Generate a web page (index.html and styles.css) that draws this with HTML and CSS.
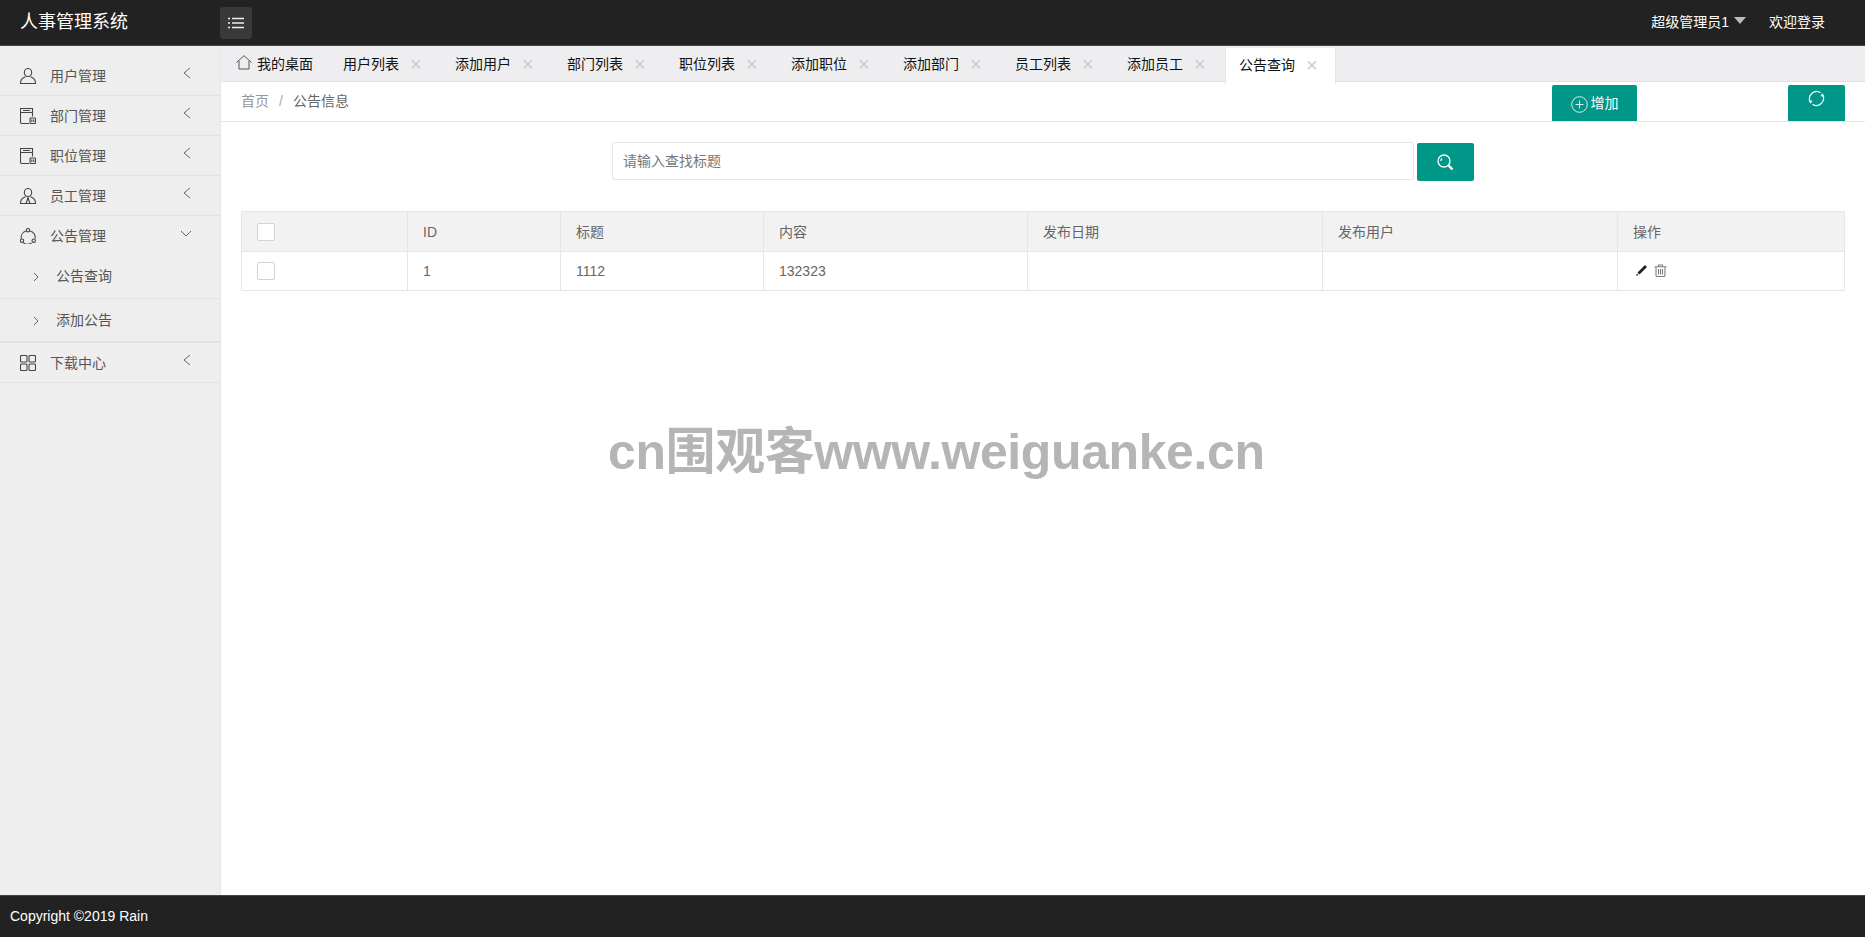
FILE: index.html
```html
<!DOCTYPE html>
<html lang="zh">
<head>
<meta charset="utf-8">
<title>人事管理系统</title>
<link rel="stylesheet" href="styles.css">
</head>
<body>
<header class="topbar">
  <div class="brand">人事管理系统</div>
  <button class="toggle" type="button" aria-label="菜单">
    <svg width="16" height="12" viewBox="0 0 16 12"><path d="M0 1.500h2M4 1.500h12M0 6h2M4 6h12M0 10.500h2M4 10.500h12" stroke="#f0f0f0" stroke-width="1.300" fill="none"/></svg>
  </button>
  <div class="user">超级管理员1<span class="caret"></span></div>
  <div class="login">欢迎登录</div>
</header>
<div class="middle">
  <nav class="side">
    <div class="nav-item">
      <svg class="nav-ico" viewBox="0 0 16 16"><ellipse cx="8" cy="4.500" rx="3.700" ry="4"/><path d="M5.500 8.800C2.500 9.800.5 12 .5 15.500h15c0-3.500-2-5.700-5-6.700"/></svg>
      <span class="nav-txt">用户管理</span>
      <svg class="chev" viewBox="0 0 10 12"><path d="M8 1L2 6l6 5"/></svg>
    </div>
    <div class="nav-item">
      <svg class="nav-ico" viewBox="0 0 16 16"><path d="M9 15.500H2A1.500 1.500 0 0 1 .5 14V.5h12v8M.5 4.500h12M3 2.500h7"/><rect x="10" y="10" width="5.500" height="5.500" rx=".8"/><path d="M11.800 11.500v2.500M13.700 11.500v2.500"/></svg>
      <span class="nav-txt">部门管理</span>
      <svg class="chev" viewBox="0 0 10 12"><path d="M8 1L2 6l6 5"/></svg>
    </div>
    <div class="nav-item">
      <svg class="nav-ico" viewBox="0 0 16 16"><path d="M9 15.500H2A1.500 1.500 0 0 1 .5 14V.5h12v8M.5 4.500h12M3 2.500h7"/><rect x="10" y="10" width="5.500" height="5.500" rx=".8"/><path d="M11.800 11.500v2.500M13.700 11.500v2.500"/></svg>
      <span class="nav-txt">职位管理</span>
      <svg class="chev" viewBox="0 0 10 12"><path d="M8 1L2 6l6 5"/></svg>
    </div>
    <div class="nav-item">
      <svg class="nav-ico" viewBox="0 0 16 16"><ellipse cx="8" cy="4.500" rx="3.700" ry="4"/><path d="M5.500 8.800C2.500 9.800.5 12 .5 15.500h15c0-3.500-2-5.700-5-6.700M8 10l-2 5.500M8 10l2 5.500M7 10h2"/></svg>
      <span class="nav-txt">员工管理</span>
      <svg class="chev" viewBox="0 0 10 12"><path d="M8 1L2 6l6 5"/></svg>
    </div>
    <div class="nav-item open">
      <svg class="nav-ico" viewBox="0 0 16 16"><path d="M5.800 3A6.800 6.800 0 0 0 1.300 10.500M10.200 3a6.800 6.800 0 0 1 5 7.500M3.200 14.600a6.800 6.800 0 0 0 8.300.4"/><circle cx="8" cy="2.200" r="1.700"/><circle cx="2" cy="12.700" r="1.700"/><circle cx="13.700" cy="12.700" r="1.700"/></svg>
      <span class="nav-txt">公告管理</span>
      <svg class="chev down" viewBox="0 0 12 10"><path d="M1 2l5 5 5-5"/></svg>
    </div>
    <div class="sub-item">
      <svg class="sub-arrow" viewBox="0 0 6 10"><path d="M1 1l4 4-4 4"/></svg>
      <span class="sub-txt">公告查询</span>
    </div>
    <div class="sub-item last">
      <svg class="sub-arrow" viewBox="0 0 6 10"><path d="M1 1l4 4-4 4"/></svg>
      <span class="sub-txt">添加公告</span>
    </div>
    <div class="nav-item">
      <svg class="nav-ico" viewBox="0 0 16 16"><rect x=".5" y=".5" width="6.500" height="6.500" rx="1"/><rect x="9" y=".5" width="6.500" height="6.500" rx="1"/><rect x=".5" y="9" width="6.500" height="6.500" rx="1"/><rect x="9" y="9" width="6.500" height="6.500" rx="1"/></svg>
      <span class="nav-txt">下载中心</span>
      <svg class="chev" viewBox="0 0 10 12"><path d="M8 1L2 6l6 5"/></svg>
    </div>
  </nav>
  <main class="content">
    <div class="tabs">
      <div class="tab home">
        <svg class="home-ico" width="16" height="15" viewBox="0 0 16 15"><path d="M.5 7.500L8 .7l7.500 6.800M3 6v8h10V6"/></svg>
        <span>我的桌面</span>
      </div>
      <div class="tab"><span>用户列表</span><span class="close">×</span></div>
      <div class="tab"><span>添加用户</span><span class="close">×</span></div>
      <div class="tab"><span>部门列表</span><span class="close">×</span></div>
      <div class="tab"><span>职位列表</span><span class="close">×</span></div>
      <div class="tab"><span>添加职位</span><span class="close">×</span></div>
      <div class="tab"><span>添加部门</span><span class="close">×</span></div>
      <div class="tab"><span>员工列表</span><span class="close">×</span></div>
      <div class="tab"><span>添加员工</span><span class="close">×</span></div>
      <div class="tab active"><span>公告查询</span><span class="close">×</span></div>
    </div>
    <div class="crumbbar">
      <div class="crumbs"><span class="crumb-home">首页</span><span class="crumb-sep">/</span><span class="crumb-now">公告信息</span></div>
      <button class="btn btn-add" type="button">
        <svg width="17" height="17" viewBox="0 0 17 17"><circle cx="8.500" cy="8.500" r="7.800"/><path d="M8.500 4.500v8M4.500 8.500h8"/></svg>
        <span>增加</span>
      </button>
      <button class="btn btn-refresh" type="button" aria-label="刷新">
        <svg width="17" height="17" viewBox="0 0 17 17"><path d="M2.500 12.100A7 7 0 0 1 12.500 2.800M14.500 4.900A7 7 0 0 1 4.500 14.200"/><path class="arrowhead" d="M.6 10.500l4 .2-2 3zM16.400 6.500l-4-.2 2-3z"/></svg>
      </button>
    </div>
    <div class="search">
      <input class="search-input" type="text" placeholder="请输入查找标题">
      <button class="btn-search" type="button" aria-label="搜索">
        <svg width="17" height="17" viewBox="0 0 17 17"><circle cx="7" cy="7" r="6"/><path class="glass-handle" d="M11.500 11.500L15.500 15.500"/><path d="M4 7a3 3 0 0 1 1-2.500"/></svg>
      </button>
    </div>
    <table class="grid">
      <colgroup>
        <col class="c1"><col class="c2"><col class="c3"><col class="c4"><col class="c5"><col class="c6"><col class="c7">
      </colgroup>
      <thead>
        <tr>
          <th><span class="check"></span></th>
          <th>ID</th><th>标题</th><th>内容</th><th>发布日期</th><th>发布用户</th><th>操作</th>
        </tr>
      </thead>
      <tbody>
        <tr>
          <td><span class="check"></span></td>
          <td>1</td><td>1112</td><td>132323</td><td></td><td></td>
          <td class="ops">
            <svg width="13" height="13" viewBox="0 0 13 13"><path d="M10 1l2 2-7.500 7.500-2-2z" fill="#222"/><path d="M2 9.500L1 12l2.500-1z" fill="#222"/></svg>
            <svg class="trash" width="13" height="13" viewBox="0 0 13 13"><path d="M.5 2.800h12M4.500 2.500V1h4v1.500M2 3v8.500a1 1 0 0 0 1 1h7a1 1 0 0 0 1-1V3M4.500 5v5.500M6.500 5v5.500M8.500 5v5.500"/></svg>
          </td>
        </tr>
      </tbody>
    </table>
    <div class="watermark">cn围观客www.weiguanke.cn</div>
  </main>
</div>
<footer class="foot">Copyright ©2019 Rain</footer>
</body>
</html>
```
FILE: styles.css
```css
* { box-sizing: border-box; }
html, body { height: 100%; }
body {
  margin: 0;
  display: flex;
  flex-direction: column;
  font: 14px/1.4 "Liberation Sans", "Noto Sans CJK SC", sans-serif;
  color: #666;
  background: #fff;
  overflow: hidden;
}
.topbar {
  height: 46px;
  flex: none;
  display: flex;
  align-items: center;
  background: #222;
  border-bottom: 1px solid #444;
  color: #fff;
}
.brand { width: 220px; padding-left: 20px; font-size: 18px; }
.toggle {
  width: 32px;
  height: 32px;
  padding: 0;
  display: flex;
  align-items: center;
  justify-content: center;
  border: 0;
  border-radius: 3px;
  background: #393939;
}
.user { margin-left: auto; display: flex; align-items: center; }
.caret {
  margin: -4px 0 0 5px;
  border: 6px solid transparent;
  border-top: 7px solid #bbb;
  border-bottom: 0;
}
.login { margin: 0 40px 0 23px; }
.middle { flex: 1; display: flex; min-height: 0; }
.side {
  width: 221px;
  flex: none;
  padding-top: 10px;
  background: #eee;
  border-right: 1px solid #e6e6e6;
}
.nav-item {
  height: 40px;
  display: flex;
  align-items: center;
  padding-left: 20px;
  border-bottom: 1px solid #e2e2e2;
  color: #555;
}
.nav-item.open { border-bottom: 0; }
.nav-ico {
  width: 16px;
  height: 16px;
  flex: none;
  fill: none;
  stroke: #444;
  stroke-width: 1.100;
}
.nav-txt { margin-left: 14px; flex: 1; position: relative; top: 1px; }
.chev {
  width: 10px;
  height: 12px;
  margin: -6px 28px 0 0;
  fill: none;
  stroke: #666;
  stroke-width: 1;
}
.chev.down { width: 12px; height: 10px; margin-right: 28px; margin-top: -5px; }
.sub-item {
  height: 43px;
  display: flex;
  align-items: center;
  padding-left: 33px;
  border-bottom: 1px solid #e2e2e2;
  color: #555;
}
.sub-item.last { border-bottom-width: 2px; height: 44px; padding-top: 2px; }
.sub-arrow {
  width: 6px;
  height: 10px;
  fill: none;
  stroke: #666;
  stroke-width: 1;
}
.sub-txt { margin-left: 17px; }
.content { flex: 1; min-width: 0; position: relative; }
.tabs {
  height: 36px;
  display: flex;
  align-items: stretch;
  background: #eeeef0;
  border-bottom: 1px solid #e2e2e2;
  color: #111;
}
.tab {
  width: 110px;
  margin-right: 2px;
  padding-left: 14px;
  display: flex;
  align-items: center;
  gap: 11px;
  line-height: 20px;
}
.tab.home { width: 108px; margin-right: 0; padding-left: 15px; gap: 5px; }
.home-ico { fill: none; stroke: #555; stroke-width: 1; margin-top: -3px; }
.tab.active {
  width: 111px;
  height: 36px;
  margin-top: 2px;
  padding: 0 0 2px 13px;
  background: #fff;
  border: 1px solid #e6e6e6;
  border-top: 0;
  border-bottom: 0;
}
.close { color: #ccc; font-size: 20px; line-height: 20px; font-family: "Liberation Sans", sans-serif; }
.crumbbar {
  height: 40px;
  display: flex;
  padding-left: 20px;
  border-bottom: 1px solid #e6e6e6;
}
.crumbs { flex: 1; padding-top: 10px; }
.crumb-home { color: #999; }
.crumb-sep { color: #aaa; margin: 0 10px; }
.crumb-now { color: #666; }
.btn {
  height: 36px;
  margin-top: 3px;
  display: flex;
  align-items: center;
  justify-content: center;
  border: 0;
  border-radius: 2px 2px 0 0;
  background: #009688;
  color: #fff;
  font: inherit;
}
.btn svg { fill: none; stroke: #d9f0ec; stroke-width: 1; }
.btn-add { width: 85px; gap: 3px; margin-right: 151px; padding: 2px 0 0; }
.btn-refresh { width: 57px; margin-right: 20px; padding: 0 0 9px; }
.btn-refresh svg { stroke: #f2fbfa; stroke-width: 1.200; }
.btn-refresh .arrowhead { fill: #f2fbfa; stroke: none; }
.search {
  display: flex;
  margin: 20px 0 0 391px;
  gap: 3px;
}
.search-input {
  width: 802px;
  height: 38px;
  padding: 0 10px;
  border: 1px solid #e6e6e6;
  border-radius: 2px;
  font: inherit;
  color: #666;
  outline: 0;
}
.search-input::placeholder { color: #777; opacity: 1; }
.btn-search {
  width: 57px;
  height: 38px;
  margin-top: 1px;
  display: flex;
  align-items: center;
  justify-content: center;
  padding: 0;
  border: 0;
  border-radius: 2px;
  background: #009688;
}
.btn-search svg { fill: none; stroke: #fff; stroke-width: 1.300; }
.glass-handle { stroke-width: 2.400; }
.grid {
  width: 1604px;
  margin: 30px 0 0 20px;
  border-collapse: collapse;
  table-layout: fixed;
  color: #666;
}
.c1 { width: 166px; }
.c2 { width: 153px; }
.c3 { width: 203px; }
.c4 { width: 264px; }
.c5 { width: 295px; }
.c6 { width: 295px; }
.grid th, .grid td {
  padding: 0 15px;
  border: 1px solid #e6e6e6;
  text-align: left;
  font-weight: 400;
  line-height: 20px;
}
.grid th { height: 40px; background: #f2f2f2; }
.grid td { height: 39px; }
.check {
  display: block;
  width: 18px;
  height: 18px;
  background: #fff;
  border: 1px solid #d2d2d2;
  border-radius: 2px;
}
.ops svg { display: inline-block; vertical-align: middle; margin: -3px 0 0 2px; }
.trash { fill: none; stroke: #7a7f86; stroke-width: 1.100; }
.watermark {
  position: absolute;
  left: 387px;
  top: 381px;
  font: 700 50px/1 "Liberation Sans", "Noto Sans CJK SC", sans-serif;
  letter-spacing: -.4px;
  color: #b5b5b5;
  white-space: nowrap;
}
.foot {
  height: 42px;
  flex: none;
  display: flex;
  align-items: center;
  padding-left: 10px;
  background: #222;
  border-top: 1px solid #444;
  color: #fff;
}
```
